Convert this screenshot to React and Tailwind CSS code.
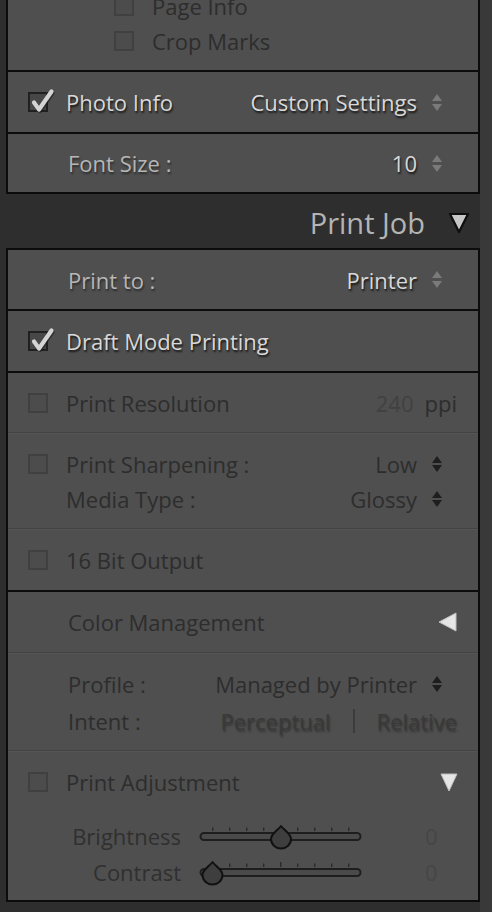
import React from "react";

const bright = "text-[#d8d8d8] [text-shadow:1px_2px_2px_rgba(0,0,0,0.75)]";
const label = "text-[#b6b6b6] [text-shadow:1px_2px_2px_rgba(0,0,0,0.45)]";
const dim = "text-[#2d2d2d]";

function CheckOn() {
  return (
    <div className="relative w-[20px] h-[20px] shrink-0 border-2 border-[#202020] bg-[#474747]">
      <svg className="absolute left-[-2px] top-[-7px] overflow-visible" width="28" height="28" viewBox="0 0 28 28">
        <path d="M6 15.5 L11 22.5 L23.5 4.5" fill="none" stroke="#1e1e1e" strokeWidth="4.4" strokeLinecap="round" strokeLinejoin="round" transform="translate(1,1.5)" opacity="0.55" />
        <path d="M6 15.5 L11 22.5 L23.5 4.5" fill="none" stroke="#d4d4d4" strokeWidth="4.2" strokeLinecap="round" strokeLinejoin="round" />
      </svg>
    </div>
  );
}

function CheckOff() {
  return <div className="w-[20px] h-[20px] shrink-0 border-2 border-[#404040] bg-[#4c4c4c]" />;
}

function UpDown({ color, gap = 3 }) {
  const g = gap;
  return (
    <svg width="10" height={14 + g} viewBox={`0 0 10 ${14 + g}`} className="shrink-0">
      <polygon points="0,7 10,7 5,0" fill={color} />
      <polygon points={`0,${7 + g} 10,${7 + g} 5,${14 + g}`} fill={color} />
    </svg>
  );
}

function Sep() {
  return (
    <div className="h-[2px] shrink-0 flex flex-col">
      <div className="h-[1px] bg-[#434343]" />
      <div className="h-[1px] bg-[#555555]" />
    </div>
  );
}

function Black() {
  return <div className="h-[2px] shrink-0 bg-[#0c0c0c]" />;
}

function Slider({ pos }) {
  const ticks = [0, 1, 2, 3, 4, 5, 6, 7, 8];
  return (
    <svg width="170" height="36" viewBox="0 0 170 36" className="shrink-0">
      {ticks.map((i) => {
        const x = 16.7 + i * 17;
        return (
          <line key={i} x1={x} x2={x} y1={i === 4 ? 8 : 9.5} y2="13" stroke="#2a2a2a" strokeWidth="1.4" />
        );
      })}
      <rect x="4.5" y="15" width="160" height="7" rx="3.5" fill="#4a4a4a" stroke="#1e1e1e" strokeWidth="2" />
      <path
        d={`M${pos} 8 C${pos - 4} 13 ${pos - 10} 16 ${pos - 10} 21 A10 9.5 0 0 0 ${pos + 10} 21 C${pos + 10} 16 ${pos + 4} 13 ${pos} 8 Z`}
        fill="#3e3e3e"
        stroke="#111"
        strokeWidth="2"
        strokeLinejoin="round"
      />
    </svg>
  );
}

export default function App() {
  return (
    <div className="w-[492px] h-[912px] bg-[#2e2e2e] flex overflow-hidden font-['Open_Sans',sans-serif] text-[22px] leading-none">
      <div className="w-[480px] pl-[6px] flex flex-col">
        {/* Box 1 */}
        <div className="border-x-2 border-b-2 border-[#0c0c0c] bg-[#4f4f4f] flex flex-col">
          <div className="h-[70px] overflow-hidden flex flex-col justify-end pb-[12px] pl-[106px]">
            <div className="h-[35px] flex items-center gap-[18px] shrink-0">
              <CheckOff />
              <span className={dim}>Page Info</span>
            </div>
            <div className="h-[35px] flex items-center gap-[18px] shrink-0">
              <CheckOff />
              <span className={dim}>Crop Marks</span>
            </div>
          </div>
          <Black />
          <div className="h-[60px] flex items-center pl-[20px] pr-[36px]">
            <CheckOn />
            <span className={`ml-[18px] ${bright}`}>Photo Info</span>
            <span className={`ml-auto ${bright}`}>Custom Settings</span>
            <span className="ml-[15px] flex"><UpDown color="#7a7a7a" /></span>
          </div>
          <Black />
          <div className="h-[58px] flex items-center pl-[60px] pr-[36px]">
            <span className={label}>Font Size :</span>
            <span className={`ml-auto ${bright}`}>10</span>
            <span className="ml-[15px] flex"><UpDown color="#7a7a7a" /></span>
          </div>
        </div>

        {/* Header */}
        <div className="h-[54px] flex items-center justify-end pr-[10px] pt-[3px]">
          <span className="text-[29px] text-[#b4b4b4]">Print Job</span>
          <svg width="22" height="24" viewBox="0 0 22 24" className="ml-[23px]">
            <polygon points="2,3 20,3 11,21" fill="#c6c6c6" stroke="#0e0e0e" strokeWidth="2.2" strokeLinejoin="round" />
          </svg>
        </div>

        {/* Box 2 */}
        <div className="border-2 border-[#0c0c0c] bg-[#4f4f4f] flex flex-col">
          <div className="h-[59px] flex items-center pl-[60px] pr-[36px]">
            <span className={label}>Print to :</span>
            <span className={`ml-auto ${bright}`}>Printer</span>
            <span className="ml-[15px] flex"><UpDown color="#7a7a7a" /></span>
          </div>
          <Black />
          <div className="h-[60px] flex items-center pl-[20px]">
            <CheckOn />
            <span className={`ml-[18px] ${bright}`}>Draft Mode Printing</span>
          </div>
          <Black />
          <div className="h-[59px] flex items-center pl-[20px] pr-[21px]">
            <CheckOff />
            <span className={`ml-[18px] ${dim}`}>Print Resolution</span>
            <span className="ml-auto text-[#414141]">240</span>
            <span className={`ml-[11px] ${dim}`}>ppi</span>
          </div>
          <Sep />
          <div className="h-[94px] flex flex-col justify-center pl-[20px] pr-[36px]">
            <div className="h-[35px] flex items-center">
              <CheckOff />
              <span className={`ml-[18px] ${dim}`}>Print Sharpening :</span>
              <span className={`ml-auto ${dim}`}>Low</span>
              <span className="ml-[15px] flex"><UpDown color="#1e1e1e" gap={2} /></span>
            </div>
            <div className="h-[35px] flex items-center pl-[38px]">
              <span className={dim}>Media Type :</span>
              <span className={`ml-auto ${dim}`}>Glossy</span>
              <span className="ml-[15px] flex"><UpDown color="#1e1e1e" gap={2} /></span>
            </div>
          </div>
          <Sep />
          <div className="h-[60px] flex items-center pl-[20px]">
            <CheckOff />
            <span className={`ml-[18px] ${dim}`}>16 Bit Output</span>
          </div>
          <Black />
          <div className="h-[60px] flex items-center pl-[60px] pr-[20px]">
            <span className={dim}>Color Management</span>
            <svg width="20" height="20" viewBox="0 0 20 20" className="ml-auto">
              <polygon points="18,1 18,19 1,10" fill="#e6e6e6" stroke="#bdbdbd" strokeWidth="1" strokeLinejoin="round" />
            </svg>
          </div>
          <Sep />
          <div className="h-[96px] flex flex-col justify-center pl-[60px]">
            <div className="h-[37px] flex items-center pr-[36px]">
              <span className={dim}>Profile :</span>
              <span className={`ml-auto ${dim}`}>Managed by Printer</span>
              <span className="ml-[15px] flex"><UpDown color="#1e1e1e" gap={2} /></span>
            </div>
            <div className="h-[37px] flex items-center pr-[21px]">
              <span className={dim}>Intent :</span>
              <div className="ml-auto flex items-center gap-[22px] text-[#393939] [text-shadow:1px_2px_2px_rgba(30,30,30,0.55)]">
                <span>Perceptual</span>
                <span className="w-[2px] h-[24px] bg-[#3c3c3c]" />
                <span>Relative</span>
              </div>
            </div>
          </div>
          <Sep />
          <div className="h-[148px] flex flex-col">
            <div className="h-[60px] flex items-center pl-[20px] pr-[20px] shrink-0">
              <CheckOff />
              <span className={`ml-[18px] ${dim}`}>Print Adjustment</span>
              <svg width="18" height="20" viewBox="0 0 18 20" className="ml-auto">
                <polygon points="1,2 17,2 9,19" fill="#e6e6e6" stroke="#bdbdbd" strokeWidth="1" strokeLinejoin="round" />
              </svg>
            </div>
            <div className="mt-[6px] h-[36px] flex items-center">
              <span className="w-[173px] text-right text-[#303030]">Brightness</span>
              <span className="ml-[15px] flex"><Slider pos={85} /></span>
              <span className="ml-[59px] text-[#464646]">0</span>
            </div>
            <div className="h-[36px] flex items-center">
              <span className="w-[173px] text-right text-[#303030]">Contrast</span>
              <span className="ml-[15px] flex"><Slider pos={16.5} /></span>
              <span className="ml-[59px] text-[#464646]">0</span>
            </div>
          </div>
        </div>
      </div>
      <div className="w-[12px] bg-[#393939]" />
    </div>
  );
}
